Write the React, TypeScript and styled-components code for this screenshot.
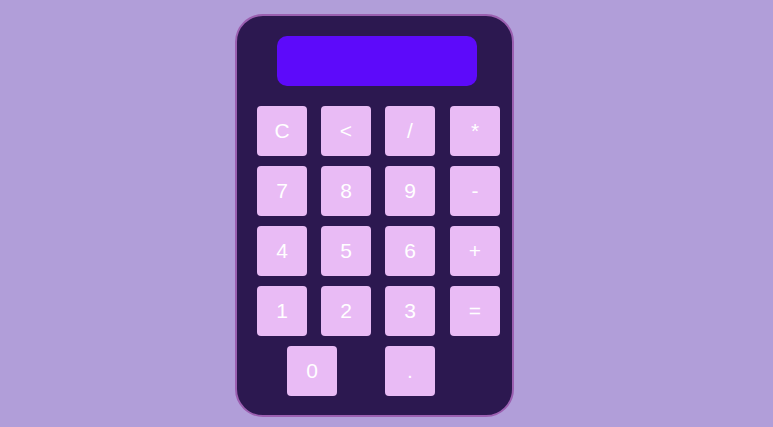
import React from 'react';
import styled, { createGlobalStyle } from 'styled-components';

const GlobalStyle = createGlobalStyle`
  html, body {
    margin: 0;
    padding: 0;
    background: #b19ed9;
  }
  body {
    font-family: "Liberation Sans", Arial, sans-serif;
  }
`;

const Page = styled.div`
  display: flex;
  padding: 14px 0 0 235px;
  min-height: 427px;
  box-sizing: border-box;
`;

const Body = styled.div`
  box-sizing: border-box;
  width: 279px;
  height: 403px;
  background: #2c1850;
  border: 2px solid #9b5fb0;
  border-radius: 28px;
  padding: 20px 12px 19px 20px;
  display: flex;
  flex-direction: column;
  gap: 20px;
`;

const Display = styled.div`
  width: 200px;
  height: 50px;
  margin-left: 20px;
  border-radius: 10px;
  background: #5d0afa;
`;

const Keys = styled.div`
  display: grid;
  grid-template-columns: 50px 50px 50px 51px;
  grid-auto-rows: 50px;
  column-gap: 14px;
  row-gap: 10px;
`;

const Key = styled.button<{ $col?: string; $shift?: number }>`
  width: 50px;
  height: 50px;
  border: none;
  border-radius: 4px;
  background: #e9bbf5;
  color: #ffffff;
  font-family: "Liberation Sans", Arial, sans-serif;
  font-size: 21px;
  padding: 0;
  display: flex;
  align-items: center;
  justify-content: center;
  justify-self: ${({ $shift }) => ($shift ? 'start' : 'end')};
  grid-column: ${({ $col }) => $col ?? 'auto'};
  margin-left: ${({ $shift }) => $shift ?? 0}px;
`;

const rows = ['C', '<', '/', '*', '7', '8', '9', '-', '4', '5', '6', '+', '1', '2', '3', '='];

export default function App() {
  return (
    <>
      <GlobalStyle />
      <Page>
        <Body>
          <Display />
          <Keys>
            {rows.map((k) => (
              <Key key={k}>{k}</Key>
            ))}
            <Key $col="1 / span 2" $shift={30}>0</Key>
            <Key $col="3">.</Key>
          </Keys>
        </Body>
      </Page>
    </>
  );
}
